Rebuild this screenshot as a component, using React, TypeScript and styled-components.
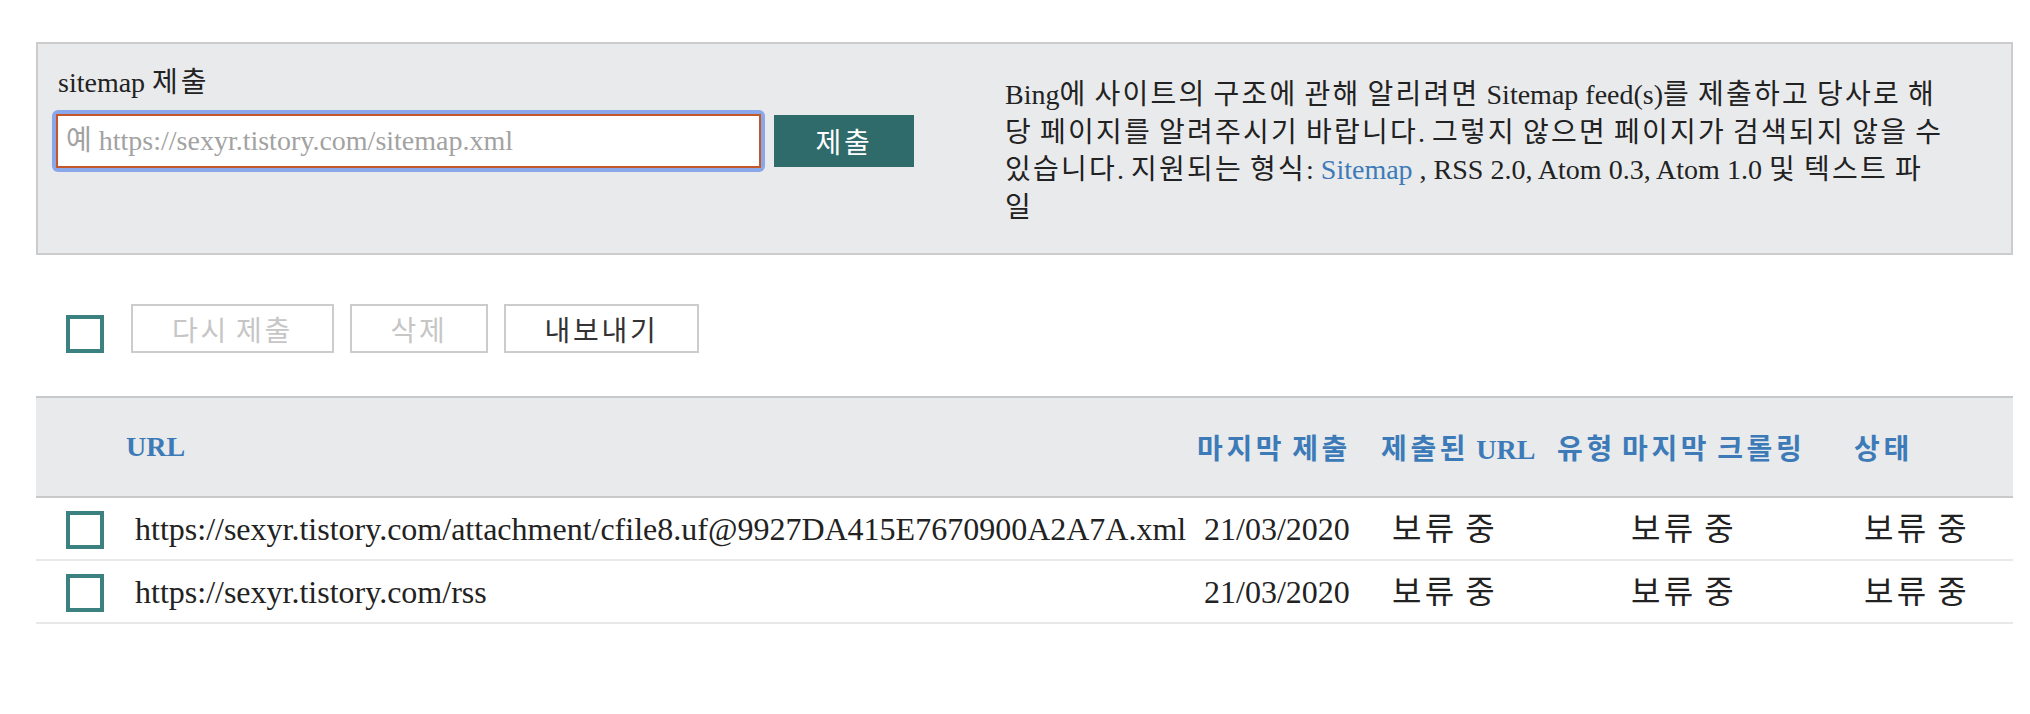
import React from "react";
import styled, { createGlobalStyle } from "styled-components";

const GlobalStyle = createGlobalStyle`
  html, body { margin: 0; padding: 0; background: #ffffff; }
  body {
    font-family: "Liberation Serif", "Noto Sans CJK KR", serif;
    color: #222222;
  }
  * { box-sizing: border-box; }
`;

const Hangul = styled.span`
  letter-spacing: var(--ko-spacing, 0.1em);
`;

const HANGUL_RUN = /([\u1100-\u11FF\u3130-\u318F\uAC00-\uD7AF]+)/;
const IS_HANGUL = /^[\u1100-\u11FF\u3130-\u318F\uAC00-\uD7AF]+$/;

function ko(text: string): React.ReactNode[] {
  return text
    .split(HANGUL_RUN)
    .filter((p) => p.length > 0)
    .map((part, i) => (IS_HANGUL.test(part) ? <Hangul key={i}>{part}</Hangul> : part));
}

const Page = styled.div`
  width: 1977px;
  margin: 42px 0 0 36px;
  display: flex;
  flex-direction: column;
`;

const SubmitPanel = styled.section`
  display: flex;
  height: 213px;
  background: #e9eaec;
  border: 2px solid #cccccc;
  padding: 25px 0 0 18px;
`;

const FormColumn = styled.div`
  display: flex;
  flex-direction: column;
  width: 858px;
`;

const FieldLabel = styled.label`
  font-size: 28px;
  line-height: 28px;
  margin: 0 0 13px 2px;
  color: #222222;
`;

const InputRow = styled.div`
  display: flex;
  align-items: center;
  gap: 9px;
  margin-left: -4px;
`;

const FocusRing = styled.div`
  padding: 4px;
  border-radius: 6px;
  background: #8aa8e9;
  display: flex;
`;

const UrlInput = styled.input`
  width: 705px;
  height: 54px;
  border: 2px solid #c4582a;
  border-radius: 0;
  background: #ffffff;
  padding: 0 0 0 8px;
  font-family: "Liberation Serif", "Noto Sans CJK KR", serif;
  font-size: 28px;
  color: #222222;
  outline: none;
  &::placeholder { color: #a2a2a2; }
`;

const PrimaryButton = styled.button`
  width: 140px;
  height: 52px;
  border: none;
  background: #2e6b6a;
  color: #ffffff;
  font-family: "Liberation Serif", "Noto Sans CJK KR", serif;
  font-size: 28px;
  padding: 0;
`;

const HelpText = styled.div`
  margin: 7px 0 0 91px;
  display: flex;
  flex-direction: column;
  font-size: 28px;
  color: #222222;
  --ko-spacing: 0.08em;
`;

const HelpLine = styled.span`
  display: block;
  height: 37.5px;
  line-height: 37.5px;
  white-space: nowrap;
`;

const HelpLink = styled.a`
  color: #3d7ab8;
  text-decoration: none;
`;

const Toolbar = styled.div`
  display: flex;
  align-items: flex-end;
  margin: 49px 0 0 30px;
  gap: 16px;
`;

const Checkbox = styled.span`
  display: block;
  width: 38px;
  height: 38px;
  border: 4px solid #3b8180;
  background: #ffffff;
  flex: none;
`;

const ToolbarCheck = styled(Checkbox)`
  margin-right: 11px;
`;

const ActionButton = styled.button<{ $w: number; $disabled?: boolean }>`
  width: ${(p) => p.$w}px;
  height: 49px;
  border: 2px solid #cccccc;
  background: #ffffff;
  color: ${(p) => (p.$disabled ? "#c6c6c6" : "#333333")};
  font-family: "Liberation Serif", "Noto Sans CJK KR", serif;
  font-size: 28px;
  padding: 0;
`;

const cols = "90px 1071px 184px 176px 65px 232px 159px";

const Table = styled.div`
  margin-top: 43px;
  display: flex;
  flex-direction: column;
`;

const HeaderRow = styled.div`
  display: grid;
  grid-template-columns: ${cols};
  align-items: center;
  height: 102px;
  background: #e9eaec;
  border-top: 2px solid #c8c9ca;
  border-bottom: 2px solid #c8c9ca;
`;

const HeadCell = styled.div`
  font-size: 28px;
  font-weight: bold;
  color: #3d7ab8;
  white-space: nowrap;
  --ko-spacing: 0.13em;
`;

const BodyRow = styled.div`
  display: grid;
  grid-template-columns: ${cols};
  align-items: center;
  height: 63px;
  border-bottom: 2px solid #e8e8e8;
`;

const CheckCell = styled.div`
  padding: 3px 0 0 30px;
  display: flex;
`;

const Cell = styled.div<{ $pad?: number }>`
  font-size: 32px;
  line-height: 38px;
  color: #222222;
  white-space: nowrap;
  padding-left: ${(p) => p.$pad ?? 9}px;
`;

const rows = [
  {
    url: "https://sexyr.tistory.com/attachment/cfile8.uf@9927DA415E7670900A2A7A.xml",
    date: "21/03/2020",
  },
  { url: "https://sexyr.tistory.com/rss", date: "21/03/2020" },
];

const headers = ["URL", "마지막 제출", "제출된 URL", "유형", "마지막 크롤링", "상태"];

export default function App() {
  return (
    <>
      <GlobalStyle />
      <Page>
        <SubmitPanel>
          <FormColumn>
            <FieldLabel>{ko("sitemap 제출")}</FieldLabel>
            <InputRow>
              <FocusRing>
                <UrlInput placeholder="예 https://sexyr.tistory.com/sitemap.xml" />
              </FocusRing>
              <PrimaryButton>{ko("제출")}</PrimaryButton>
            </InputRow>
          </FormColumn>
          <HelpText>
            <HelpLine>{ko("Bing에 사이트의 구조에 관해 알리려면 Sitemap feed(s)를 제출하고 당사로 해")}</HelpLine>
            <HelpLine>{ko("당 페이지를 알려주시기 바랍니다. 그렇지 않으면 페이지가 검색되지 않을 수")}</HelpLine>
            <HelpLine>
              {ko("있습니다. 지원되는 형식: ")}
              <HelpLink href="#">Sitemap</HelpLink>
              {ko(" , RSS 2.0, Atom 0.3, Atom 1.0 및 텍스트 파")}
            </HelpLine>
            <HelpLine>{ko("일")}</HelpLine>
          </HelpText>
        </SubmitPanel>

        <Toolbar>
          <ToolbarCheck />
          <ActionButton $w={203} $disabled>{ko("다시 제출")}</ActionButton>
          <ActionButton $w={138} $disabled>{ko("삭제")}</ActionButton>
          <ActionButton $w={195}>{ko("내보내기")}</ActionButton>
        </Toolbar>

        <Table>
          <HeaderRow>
            <div />
            {headers.map((h) => (
              <HeadCell key={h}>{ko(h)}</HeadCell>
            ))}
          </HeaderRow>
          {rows.map((r) => (
            <BodyRow key={r.url}>
              <CheckCell>
                <Checkbox />
              </CheckCell>
              <Cell>{r.url}</Cell>
              <Cell $pad={7}>{r.date}</Cell>
              <Cell $pad={11}>{ko("보류 중")}</Cell>
              <Cell />
              <Cell>{ko("보류 중")}</Cell>
              <Cell $pad={10}>{ko("보류 중")}</Cell>
            </BodyRow>
          ))}
        </Table>
      </Page>
    </>
  );
}
